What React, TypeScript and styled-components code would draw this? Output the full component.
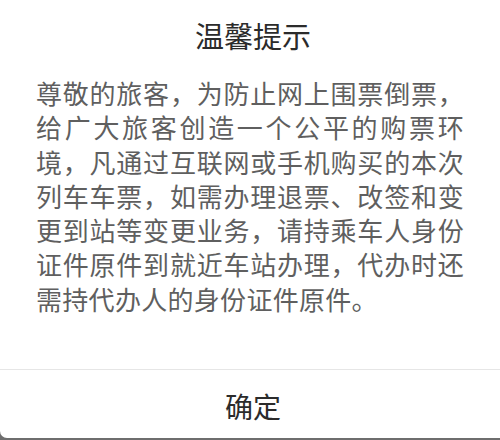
import React from 'react'
import styled, { createGlobalStyle } from 'styled-components'

const GlobalStyle = createGlobalStyle`
    html, body {
        margin: 0;
        padding: 0;
        background: #6e6e6e;
    }
    body {
        width: 500px;
        height: 440px;
        overflow: hidden;
        font-family: "Noto Sans CJK SC", "Noto Sans", sans-serif;
    }
`

const Dialog = styled.div`
    width: 500px;
    height: 438px;
    background: #ffffff;
    border-bottom-left-radius: 7px;
    display: flex;
    flex-direction: column;
    overflow: hidden;
`

const Title = styled.div`
    margin-top: 14px;
    height: 42px;
    line-height: 42px;
    text-align: center;
    font-size: 29px;
    color: #2b2b2b;
    padding-left: 6px;
`

const Message = styled.div`
    flex: 1;
    margin-top: 20px;
    padding: 0 36px 0 36px;
    font-size: 26px;
    line-height: 34.3px;
    letter-spacing: 0.3px;
    color: #5f5f5f;
    text-align: justify;
`

const Footer = styled.div`
    height: 68px;
    border-top: 1px solid #e6e6e6;
    display: flex;
    align-items: center;
    justify-content: center;
`

const ConfirmButton = styled.button`
    border: none;
    background: transparent;
    padding: 4px 0 0 6px;
    font-family: inherit;
    font-size: 28px;
    color: #2b2b2b;
    cursor: pointer;
`

const App = () => {
    return (
        <>
            <GlobalStyle />
            <Dialog>
                <Title>温馨提示</Title>
                <Message>
                    尊敬的旅客，为防止网上围票倒票，给广大旅客创造一个公平的购票环境，凡通过互联网或手机购买的本次列车车票，如需办理退票、改签和变更到站等变更业务，请持乘车人身份证件原件到就近车站办理，代办时还需持代办人的身份证件原件。
                </Message>
                <Footer>
                    <ConfirmButton>确定</ConfirmButton>
                </Footer>
            </Dialog>
        </>
    )
}

export default App
